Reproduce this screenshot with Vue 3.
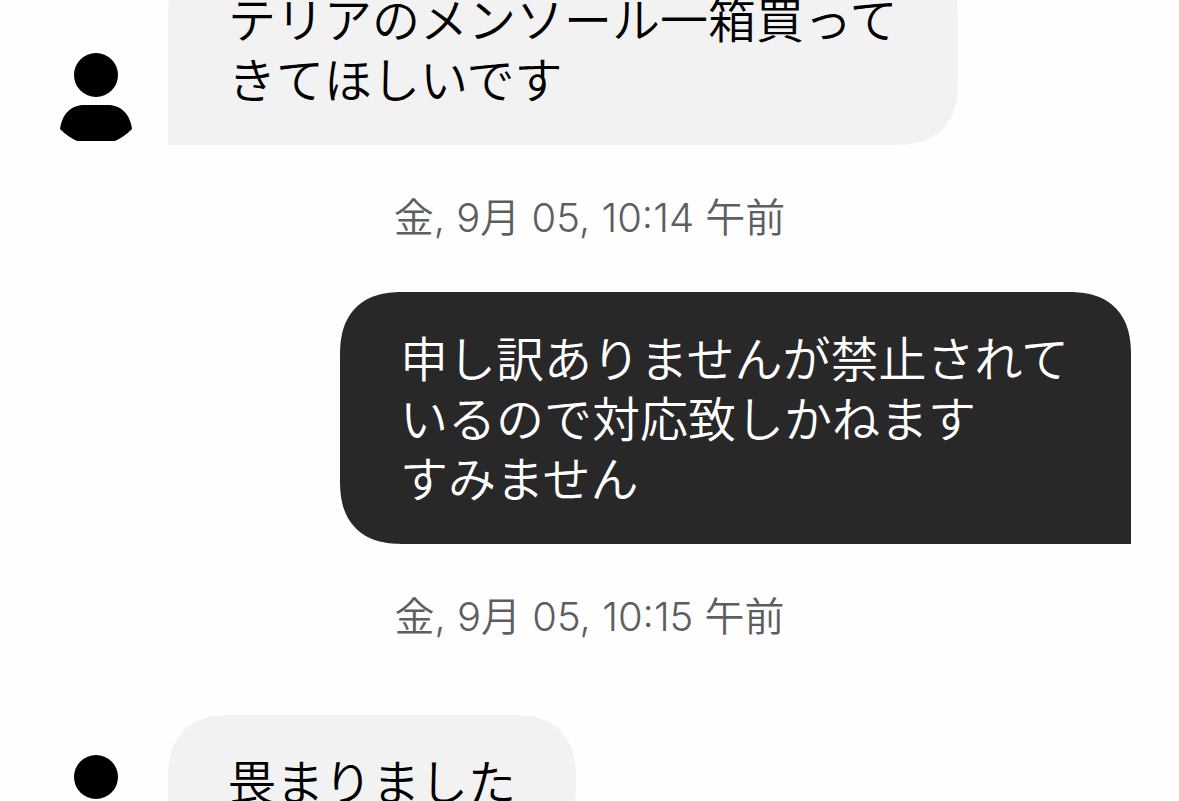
<script setup>
const messages = [
  { id: 1, side: 'theirs', lines: ['テリアのメンソール一箱買って', 'きてほしいです'] },
  { id: 2, side: 'mine', time: '金, 9月 05, 10:14 午前', lines: ['申し訳ありませんが禁止されて', 'いるので対応致しかねます', 'すみません'] },
  { id: 3, side: 'theirs', time: '金, 9月 05, 10:15 午前', lines: ['畏まりました'] }
]
</script>

<template>
  <main class="chat">
    <template v-for="m in messages" :key="m.id">
      <time v-if="m.time" class="stamp" :class="'before-' + m.side">{{ m.time }}</time>
      <article class="row" :class="m.side">
        <svg v-if="m.side === 'theirs'" class="avatar" viewBox="0 0 72 88" aria-hidden="true">
          <circle cx="36" cy="22" r="22" />
          <path d="M0 76C2 61 11 52 24 52H48C61 52 70 61 72 76Q64 84 55 88H17Q8 84 0 76Z" />
        </svg>
        <p class="bubble">
          <span v-for="line in m.lines" :key="line" class="line">{{ line }}</span>
        </p>
      </article>
    </template>
  </main>
</template>

<style scoped>
.chat {
  height: 100vh;
  overflow: hidden;
  box-sizing: border-box;
  padding: 0 48px 0 60px;
  background: #fefefe;
  color: #000;
  font-family: "Noto Sans CJK JP", sans-serif;
  font-weight: 350;
}
.row {
  display: flex;
  align-items: flex-end;
}
.row:first-child {
  margin-top: -47px;
}
.mine {
  justify-content: flex-end;
}
.avatar {
  width: 72px;
  height: 88px;
  flex: none;
  margin: 0 36px 4px 0;
}
.bubble {
  margin: 0;
  box-sizing: border-box;
  padding: 34px 60px 38px;
  font-size: 48px;
  line-height: 60px;
  background: #f2f2f2;
  border-radius: 54px 54px 54px 0;
}
.mine .bubble {
  padding-right: 62px;
  color: #fff;
  background: #282828;
  border-radius: 54px 54px 0 54px;
}
@supports (corner-shape: superellipse(1.3)) {
  .bubble {
    border-radius: 64px 64px 64px 0;
    corner-shape: superellipse(1.3);
  }
  .mine .bubble {
    border-radius: 64px 64px 0 64px;
  }
}
.line {
  display: block;
  white-space: nowrap;
}
.stamp {
  display: block;
  margin-left: -12px;
  padding: 43px 0 44px;
  text-align: center;
  font-family: Inter, "Noto Sans CJK JP", sans-serif;
  font-size: 40px;
  line-height: 60px;
  color: #5e5e5e;
}
.before-theirs {
  padding-bottom: 68px;
}
</style>

<style>
body {
  margin: 0;
}
</style>
